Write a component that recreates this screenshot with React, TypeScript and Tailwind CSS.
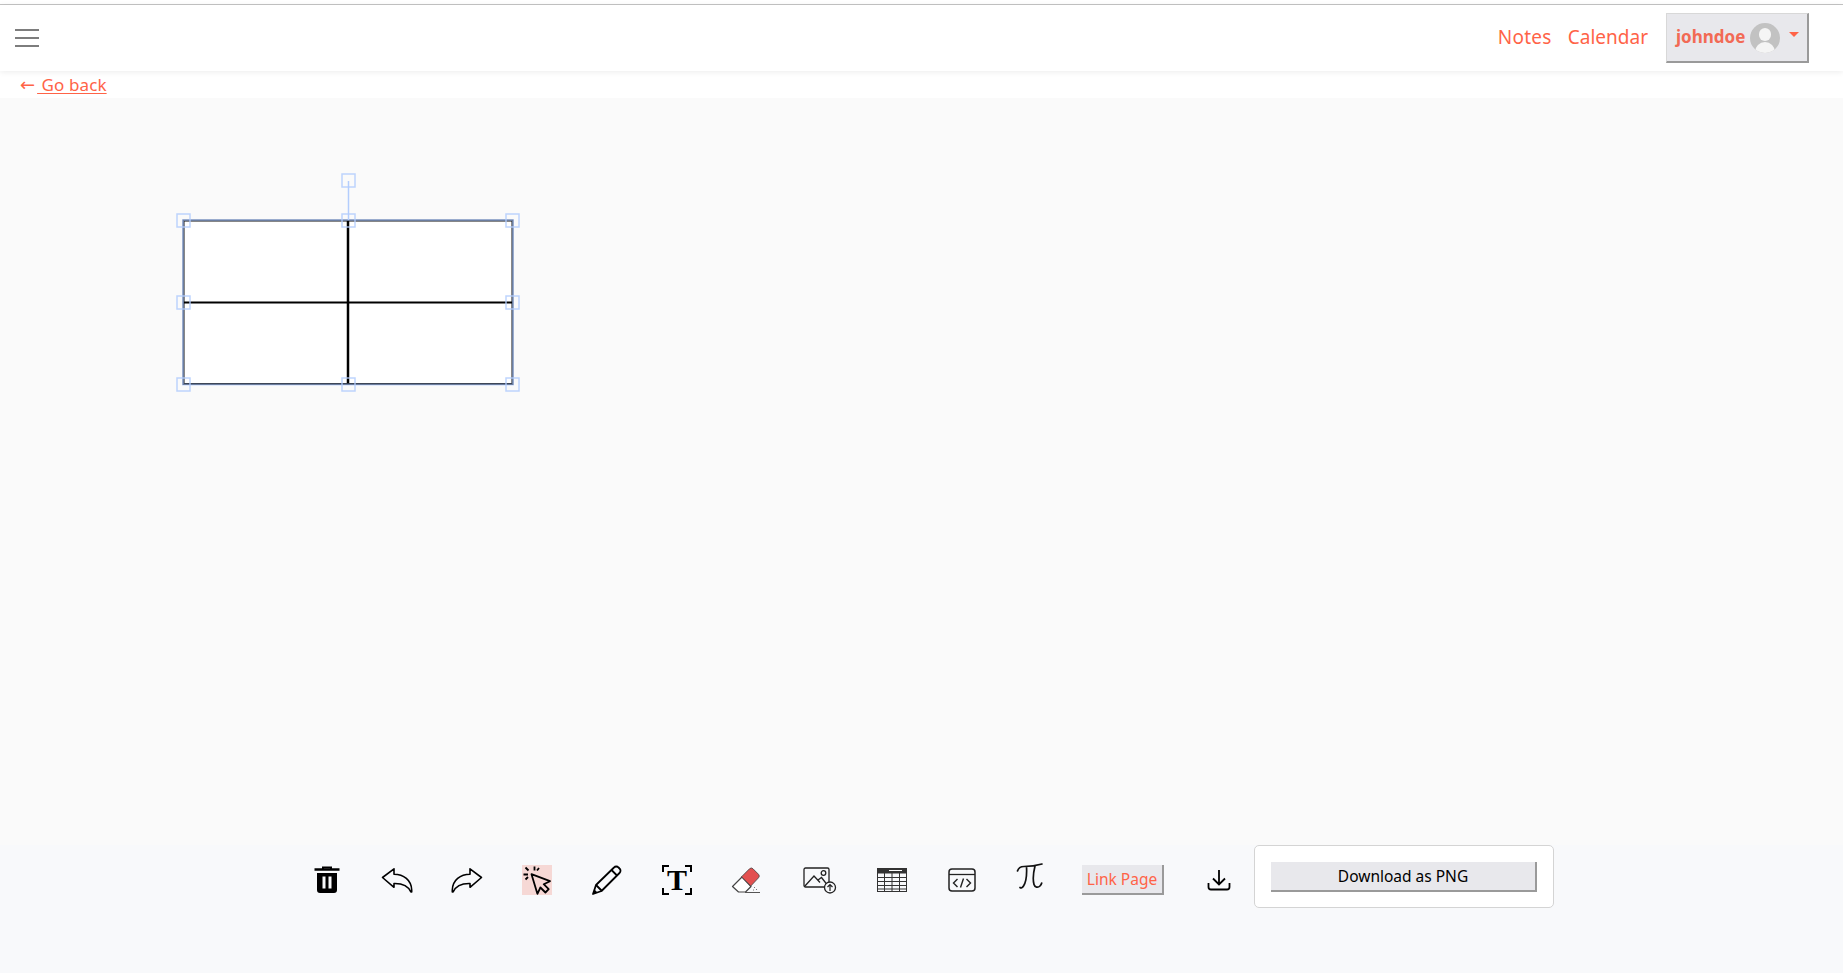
const font = { fontFamily: '"Noto Sans", "Open Sans", sans-serif' };

// page coordinates minus the drawing's origin (170, 170)
const handles: [number, number][] = [
  [13, 50], [178, 50], [342, 50],
  [13, 132], [342, 132],
  [13, 214], [178, 214], [342, 214],
  [178, 10],
];

const SelectedDrawing = () => (
  <svg width="370" height="230" viewBox="0 0 370 230" className="ml-[170px] mt-[72px] block">
    <rect x="13.500" y="50.500" width="329" height="163.500" fill="#fff" stroke="#111" strokeWidth="2" />
    <line x1="13" y1="132.500" x2="343" y2="132.500" stroke="#000" strokeWidth="2" />
    <line x1="178" y1="50" x2="178" y2="214" stroke="#000" strokeWidth="2.500" />
    <rect x="13" y="50" width="330" height="164.500" fill="none" stroke="#a9c7ff" strokeWidth="2" opacity="0.6" />
    <line x1="178.500" y1="11" x2="178.500" y2="50" stroke="#b3cdfd" strokeWidth="1.500" />
    {handles.map(([x, y]) => (
      <rect key={`${x}-${y}`} x={x - 6} y={y - 6} width="13" height="13" fill="none" stroke="#b3cdfd" strokeWidth="1.500" opacity="0.85" />
    ))}
  </svg>
);

const Trash = () => (
  <svg width="28" height="30" viewBox="0 0 28 30">
    <path d="M10 5V2.500h8V5" fill="none" stroke="#000" strokeWidth="2" />
    <path d="M1.500 4.500h25" stroke="#000" strokeWidth="2.500" />
    <path fillRule="evenodd" d="M4 8h20v17a3 3 0 0 1-3 3H7a3 3 0 0 1-3-3zM9.500 11.500v12h3v-12zM15.500 11.500v12h3v-12z" fill="#000" />
  </svg>
);

const Undo = ({ flip = false }: { flip?: boolean }) => (
  <svg width="32" height="26" viewBox="0 0 32 26" className={flip ? "-scale-x-100" : undefined}>
    <path
      d="M1.500 10.500 13 1.800v5.400c9.500 0 17.500 6 17.700 15.800v2h-.8C27.500 19.500 21 16.300 13 16.500v3.800z"
      fill="none"
      stroke="#000"
      strokeWidth="1.600"
      strokeLinejoin="round"
    />
  </svg>
);

const Pointer = () => (
  <div className="w-[30px] h-[30px] bg-[#f6d8d5]">
    <svg width="30" height="30" viewBox="0 0 30 30">
      <path d="M9.500 9.200 28 16.200l-6.300 3 5 5-3.300 3.300-5-5-3 6.300z" fill="none" stroke="#000" strokeWidth="1.800" strokeLinejoin="round" />
      <path d="M3.500 2.500 6.500 5.500M1.500 9.500H6M12.500 1.500v4M3.500 14.500l2.500-2.500M17 3l-2 2.500" stroke="#000" strokeWidth="1.800" fill="none" />
    </svg>
  </div>
);

const Pencil = () => (
  <svg width="32" height="32" viewBox="0 0 32 32">
    <path d="M2 30l3-9L23 3.500a3 3 0 0 1 4.500 0l1 1a3 3 0 0 1 0 4.500L10.500 27z" fill="none" stroke="#000" strokeWidth="1.800" strokeLinejoin="round" />
    <path d="M20.500 6l5.500 5.500M5 21l6 6" stroke="#000" strokeWidth="1.800" fill="none" />
    <path d="M2 30l1.500-4.500 3 3z" fill="#000" />
  </svg>
);

const TextTool = () => (
  <div className="relative w-[30px] h-[30px] flex items-center justify-center">
    <svg width="30" height="30" viewBox="0 0 30 30" className="absolute inset-0">
      <path d="M1 7V1h6M23 1h6v6M1 23v6h6M23 29h6v-6" fill="none" stroke="#000" strokeWidth="2" />
    </svg>
    <span className="text-[30px] leading-none font-bold text-black" style={{ fontFamily: '"Liberation Serif", serif' }}>T</span>
  </div>
);

const Eraser = () => (
  <svg width="30" height="28" viewBox="0 0 30 28">
    <path d="M1.500 19.500 11 10l9 9.500-5.500 5.500H7.500z" fill="#fff" stroke="#444" strokeWidth="1.200" strokeLinejoin="round" />
    <path d="M10.500 9.800 18.500 1.800a2.500 2.500 0 0 1 3.500 0l5.500 5.500a2.500 2.500 0 0 1 0 3.500L19.800 19z" fill="#e25050" stroke="#444" strokeWidth="0.800" />
    <path d="M14 25.500h15" stroke="#555" strokeWidth="1" />
    <path d="M23 20.500h1M25 22.500h1M22 23h1" stroke="#777" strokeWidth="1" />
  </svg>
);

const ImageAdd = () => (
  <svg width="34" height="28" viewBox="0 0 34 28">
    <rect x="1" y="1" width="25" height="19" rx="1.500" fill="none" stroke="#222" strokeWidth="1.300" />
    <path d="M1.500 19.500 11 9l6 6.500M15 13l3.500-2.500 7 9" fill="none" stroke="#222" strokeWidth="1.300" />
    <circle cx="20.500" cy="6" r="2.300" fill="none" stroke="#222" strokeWidth="1.300" />
    <circle cx="27" cy="20.500" r="5.500" fill="#f8f9fb" stroke="#222" strokeWidth="1.300" />
    <path d="M27 24v-6.500M24.500 20l2.500-2.500 2.500 2.500" fill="none" stroke="#222" strokeWidth="1.200" />
  </svg>
);

const TableIcon = () => (
  <svg width="30" height="24" viewBox="0 0 30 24">
    <rect x="0.500" y="0.500" width="29" height="23" fill="none" stroke="#333" />
    <rect x="0.500" y="0.500" width="29" height="5" fill="#333" />
    <path d="M12 2.500h13" stroke="#fff" strokeWidth="1" />
    <path d="M0 9.500h30M0 13.500h30M0 17.500h30M0 21h30M7.500 5v18M15 5v18M22.500 5v18" stroke="#333" strokeWidth="1" fill="none" />
  </svg>
);

const CodeIcon = () => (
  <svg width="28" height="24" viewBox="0 0 28 24">
    <rect x="1" y="1" width="26" height="22" rx="3" fill="none" stroke="#222" strokeWidth="1.500" />
    <path d="M1 6.500h26" stroke="#222" strokeWidth="1.300" />
    <path d="M9.500 11 5.500 15l4 4M18.500 11l4 4-4 4M15.500 10.500l-3 9" fill="none" stroke="#222" strokeWidth="1.400" />
  </svg>
);

const PiIcon = () => (
  <svg width="28" height="28" viewBox="0 0 28 28" className="-mt-[3px]">
    <path
      d="M1.500 8C2.500 4.500 5 3.500 8 3.500c5 0 11-.5 18-2.500M10.500 3.500C11 12 10 19 7.500 23c-1 1.800-2.500 2.300-3.500 1.500M19 3c-1.500 6-2.500 13-1 18.500.8 3 4 3.500 6 1.500 1-1 1.500-2 1.700-3"
      fill="none"
      stroke="#111"
      strokeWidth="1.700"
      strokeLinecap="round"
    />
  </svg>
);

const DownloadIcon = () => (
  <svg width="24" height="22" viewBox="0 0 24 22">
    <path d="M12 1v14M6 9.500l6 6 6-6" fill="none" stroke="#000" strokeWidth="1.800" />
    <path d="M1.500 14v4a2.500 2.500 0 0 0 2.500 2.500h16a2.500 2.500 0 0 0 2.500-2.500v-4" fill="none" stroke="#000" strokeWidth="1.800" />
  </svg>
);

const App = () => {
  return (
    <div className="h-[973px] overflow-hidden flex flex-col bg-[#fafafa]" style={font}>
      <div className="h-[5px] bg-white border-b border-[#c4c4c4]" />
      <nav className="h-[66px] bg-white shadow-[0_1px_6px_rgba(0,0,0,0.08)] relative z-10 flex items-center justify-between pl-[15px] pr-[34px]">
        <div className="flex flex-col gap-[6px] w-6">
          <div className="h-[2px] bg-[#7d7d7d]" />
          <div className="h-[2px] bg-[#7d7d7d]" />
          <div className="h-[2px] bg-[#7d7d7d]" />
        </div>
        <div className="flex items-center">
          <a className="text-[19px] tracking-[0.3px] text-[#ff6347] mr-[16px] -mt-[2px]">Notes</a>
          <a className="text-[19px] text-[#ff6347] mr-[18px] -mt-[2px]">Calendar</a>
          <button className="w-[143px] h-[50px] bg-[#e8e8ec] border-r-2 border-b-2 border-[#9a9a9a] border-t border-l border-t-[#d8d8d8] border-l-[#d8d8d8] flex items-center pl-[9px]">
            <span className="text-[17px] font-bold text-[#f26a55] -mt-[1px]">johndoe</span>
            <span className="ml-[5px] w-[30px] h-[30px] rounded-full bg-[#c2c2c2] relative overflow-hidden shrink-0">
              <span className="absolute left-[9px] top-[5px] w-[12px] h-[13px] rounded-full bg-[#f5f5f5]" />
              <span className="absolute left-[5px] top-[19px] w-[20px] h-[14px] rounded-t-full bg-[#f5f5f5]" />
            </span>
            <span className="ml-[9px] -mt-[6px] w-0 h-0 border-l-[5px] border-r-[5px] border-t-[5px] border-l-transparent border-r-transparent border-t-[#ff6347]" />
          </button>
        </div>
      </nav>
      <div className="h-[27px] bg-white pl-[20px] flex items-center">
        <span className="text-[18px] text-[#ff6347] leading-none" style={{ fontFamily: '"DejaVu Sans", sans-serif' }}>←</span>
        <a className="ml-[2px] text-[17px] tracking-[0.1px] text-[#ff6347] underline underline-offset-2 whitespace-pre">{" Go back"}</a>
      </div>
      <main className="flex-1">
        <SelectedDrawing />
      </main>
      <div className="h-[128px] bg-[#f8f9fb] flex items-start pl-[312px]">
        <div className="flex items-start h-[63px]">
          <div className="w-[30px] mt-[20px] flex justify-center"><Trash /></div>
          <div className="w-[32px] ml-[39px] mt-[22px] flex justify-center"><Undo /></div>
          <div className="w-[32px] ml-[38px] mt-[22px] flex justify-center"><Undo flip /></div>
          <div className="ml-[39px] mt-[20px]"><Pointer /></div>
          <div className="ml-[39px] mt-[19px]"><Pencil /></div>
          <div className="ml-[39px] mt-[20px]"><TextTool /></div>
          <div className="ml-[39px] mt-[22px]"><Eraser /></div>
          <div className="ml-[42px] mt-[22px]"><ImageAdd /></div>
          <div className="ml-[40px] mt-[23px]"><TableIcon /></div>
          <div className="ml-[41px] mt-[23px]"><CodeIcon /></div>
          <div className="ml-[40px] mt-[21px]"><PiIcon /></div>
          <button className="ml-[38px] mt-[20px] w-[82px] h-[30px] pt-[2px] bg-[#e8e8ec] border-r-2 border-b-2 border-[#9a9a9a] text-[15.500px] text-[#ff6347] whitespace-nowrap">Link Page</button>
          <div className="ml-[43px] mt-[24px]"><DownloadIcon /></div>
          <div className="ml-[23px] w-[300px] h-[63px] bg-white border border-[#d4d4d4] rounded-[5px] flex items-center justify-center">
            <button className="w-[266px] h-[30px] pt-[2px] bg-[#e8e8ec] border-r-2 border-b-2 border-[#9a9a9a] text-[15.500px] text-black">Download as PNG</button>
          </div>
        </div>
      </div>
    </div>
  );
};

export default App;
